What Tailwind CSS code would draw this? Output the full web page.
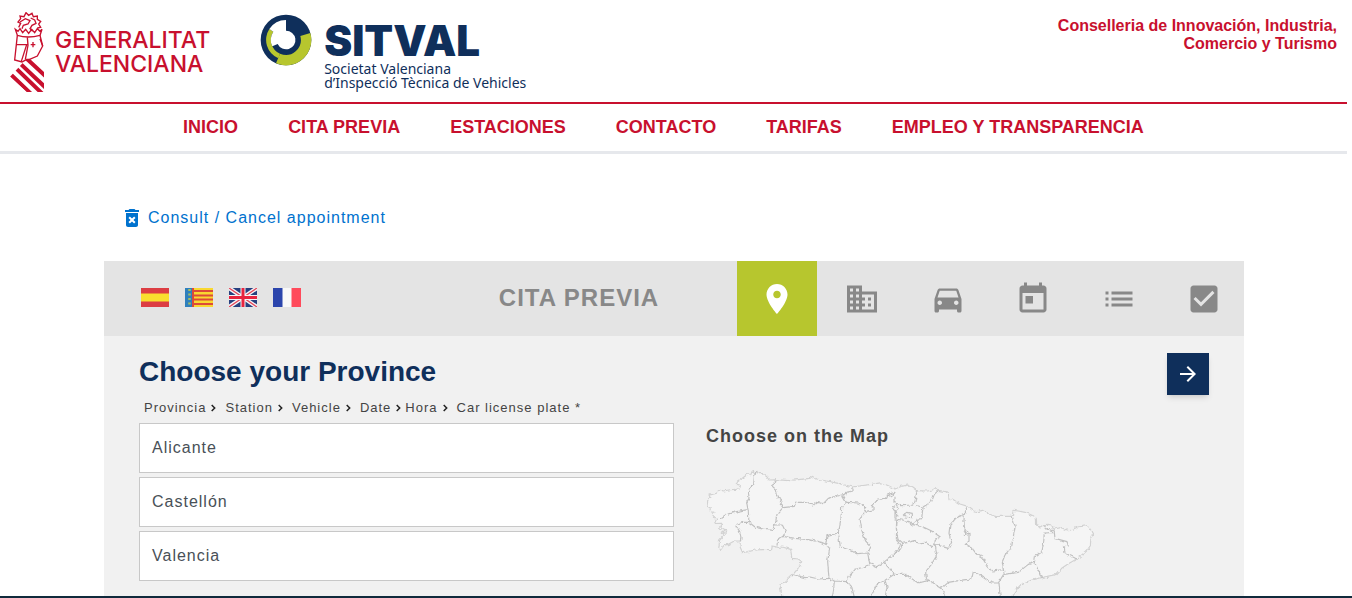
<!DOCTYPE html>
<html lang="en">
  <head>
    <meta charset="UTF-8" />
    <meta name="viewport" content="width=device-width, initial-scale=1.0" />
    <title>Cita Previa - SITVAL</title>
    <script src="https://cdn.jsdelivr.net/npm/@tailwindcss/browser@4"></script>
  </head>
  <body class="flex h-screen flex-col overflow-hidden bg-white pr-1 font-['Liberation_Sans',Arial,sans-serif]">
    <header class="mr-px flex h-26 shrink-0 items-start justify-between border-b-2 border-[#c8102e] px-2.5 pt-3">
      <div class="flex items-start gap-[50px]">
        <a href="#" class="flex items-start gap-2.5 text-[#c8102e]">
          <svg class="h-[81px] w-[35px]" viewBox="30 36 105 243" fill="none" stroke="currentColor" stroke-width="4">
            <clipPath id="shield"><path d="M30 230 80 176 132 176V276H80Z" /></clipPath>
            <path d="M56 82 62 70 54 66 62 56 60 48 72 50 78 38 86 46 96 40 100 50 112 48 112 58 122 64 116 72 122 82 112 84" />
            <path d="M60 66 76 56 90 62 84 72 70 76 66 86M92 54 104 60 108 70 96 76 90 86 98 94" />
            <path d="M46 88 54 94 60 86 68 98 77 88 86 100 95 88 104 98 112 86 120 94 126 88 120 106 Q84 116 52 106Z" />
            <path d="M52 106 44 180 66 186 80 178 M120 106 128 138 112 168 80 182" />
            <path d="M48 134 80 134 64 184M82 112 84 136 76 178M120 116 128 138" />
            <path d="M92 134H106M99 126V142" />
            <path clip-path="url(#shield)" stroke-width="12" d="M78 174 140 232M60 190 140 266M46 203 130 284M30 221 92 280" />
          </svg>
          <span class="mt-4 font-['Inter',sans-serif] text-[23px] leading-6 font-medium">GENERALITAT<br />VALENCIANA</span>
        </a>
        <a href="#" class="flex items-start gap-3 text-[#0f2f5b]">
          <svg class="mt-0.5 size-[52px]" viewBox="31 41 156 156">
            <circle cx="109" cy="119" r="76" fill="#0f2f5b" />
            <path fill="#b7c62e" d="M182 98A76 76 0 0 1 79 189L91 160A45 45 0 0 0 152 107Z" />
            <path fill="#b7c62e" d="M86 174A60 60 0 0 1 59 86L71 94A45 45 0 0 0 91 160Z" />
            <path fill="#fff" d="M59 86A60 60 0 0 1 109 59V91A28 28 0 1 1 84 131L68 138A45 45 0 0 1 71 94Z" />
          </svg>
          <span class="mt-2 flex flex-col">
            <span class="font-['Inter',sans-serif] text-[42px] leading-[42px] font-black">SITVAL</span>
            <span class="font-['Noto_Sans',sans-serif] text-sm leading-[14px]">Societat Valenciana<br />d’Inspecció Tècnica de Vehicles</span>
          </span>
        </a>
      </div>
      <p class="mt-[5px] text-right text-base leading-[18px] font-bold text-[#c8102e]">
        Conselleria de Innovación, Industria,<br />Comercio y Turismo
      </p>
    </header>

    <nav class="mr-px flex h-[50px] shrink-0 items-center justify-center gap-[50px] border-b-3 border-[#e6e8ec] pr-5 pb-0.5 text-lg font-bold text-[#c8102e]">
      <a href="#">INICIO</a>
      <a href="#">CITA PREVIA</a>
      <a href="#">ESTACIONES</a>
      <a href="#">CONTACTO</a>
      <a href="#">TARIFAS</a>
      <a href="#">EMPLEO Y TRANSPARENCIA</a>
    </nav>

    <main class="mx-auto flex w-full max-w-[1140px] flex-1 flex-col tracking-[1px]">
      <a href="#" class="mt-13 mb-[31px] ml-4 flex h-6 items-center gap-1 self-start text-base text-[#0072ce]">
        <svg class="size-6" viewBox="0 0 24 24" fill="currentColor">
          <path d="M6 19c0 1.1.9 2 2 2h8c1.100 0 2-.9 2-2V7H6v12zm2.460-7.120l1.410-1.410L12 12.590l2.120-2.120 1.410 1.410L13.410 14l2.120 2.120-1.410 1.410L12 15.410l-2.120 2.120-1.410-1.410L10.590 14l-2.130-2.120zM15.500 4l-1-1h-5l-1 1H5v2h14V4z" />
        </svg>
        Consult / Cancel appointment
      </a>

      <!-- Toolbar: languages, title and steps -->
      <div class="flex h-[75px] shrink-0 items-center bg-[#e4e4e4]">
        <div class="flex w-[317px] gap-4 pb-0.5 pl-[37px]">
          <button aria-label="Español">
            <svg class="h-[19px] w-7" viewBox="0 0 28 19">
              <path fill="#dc3d43" d="M0 0h28v19H0z" />
              <path fill="#f9df2e" d="M0 5.500h28v8H0z" />
            </svg>
          </button>
          <button aria-label="Valencià">
            <svg class="h-[19px] w-7" viewBox="0 0 28 19">
              <path fill="#f9d830" d="M0 0h28v19H0z" />
              <path stroke="#dc4a38" stroke-width="2" d="M9 3h19M9 7.500h19M9 11.500h19M9 16h19" />
              <path fill="#2f80bd" d="M0 0h7v19H0z" />
              <path fill="#dc4a38" d="M7 0h2v19H7z" />
              <path stroke="#a8bd5c" stroke-width="2.500" stroke-dasharray="2 2.500" d="M4.500 1v18" />
            </svg>
          </button>
          <button aria-label="English">
            <svg class="h-[19px] w-7" viewBox="0 0 28 19">
              <path fill="#27407f" d="M0 0h28v19H0z" />
              <path stroke="#f5f5f7" stroke-width="4" d="M0 0l28 19M28 0L0 19" />
              <path stroke="#e4475a" stroke-width="1.300" d="M0 0l28 19M28 0L0 19" />
              <path stroke="#f5f5f7" stroke-width="5" d="M14 0v19M0 9.500h28" />
              <path stroke="#e8243f" stroke-width="3" d="M14 0v19M0 9.500h28" />
            </svg>
          </button>
          <button aria-label="Français">
            <svg class="h-[19px] w-7" viewBox="0 0 28 19">
              <path fill="#f8f8f8" d="M0 0h28v19H0z" />
              <path fill="#2b45ac" d="M0 0h9.500v19H0z" />
              <path fill="#ff4a5b" d="M18.500 0H28v19h-9.500z" />
            </svg>
          </button>
        </div>
        <h1 class="flex-1 pb-0.5 text-center text-2xl font-bold text-[#888]">CITA PREVIA</h1>
        <div class="flex h-full w-[507px] justify-between text-[#888]">
          <button aria-label="Provincia" class="flex w-20 items-center justify-center bg-[#b7c62e] text-white">
            <svg class="size-9" viewBox="0 0 24 24" fill="currentColor">
              <path d="M12 2C8.130 2 5 5.130 5 9c0 5.250 7 13 7 13s7-7.750 7-13c0-3.870-3.130-7-7-7zm0 9.500c-1.380 0-2.500-1.120-2.500-2.500s1.120-2.500 2.500-2.500 2.500 1.120 2.500 2.500-1.120 2.500-2.500 2.500z" />
            </svg>
          </button>
          <button aria-label="Station" class="flex w-20 items-center justify-center">
            <svg class="size-9" viewBox="0 0 24 24" fill="currentColor">
              <path d="M12 7V3H2v18h20V7H12zM6 19H4v-2h2v2zm0-4H4v-2h2v2zm0-4H4V9h2v2zm0-4H4V5h2v2zm4 12H8v-2h2v2zm0-4H8v-2h2v2zm0-4H8V9h2v2zm0-4H8V5h2v2zm10 12h-8v-2h2v-2h-2v-2h2v-2h-2V9h8v10zm-2-8h-2v2h2v-2zm0 4h-2v2h2v-2z" />
            </svg>
          </button>
          <button aria-label="Vehicle" class="flex w-20 items-center justify-center">
            <svg class="size-9" viewBox="0 0 24 24" fill="currentColor">
              <path d="M18.920 6.010C18.720 5.420 18.160 5 17.500 5h-11c-.66 0-1.210.42-1.420 1.010L3 12v8c0 .55.45 1 1 1h1c.55 0 1-.45 1-1v-1h12v1c0 .55.45 1 1 1h1c.55 0 1-.45 1-1v-8l-2.080-5.990zM6.500 16c-.83 0-1.500-.67-1.500-1.500S5.670 13 6.500 13s1.500.67 1.500 1.500S7.330 16 6.500 16zm11 0c-.83 0-1.500-.67-1.500-1.500s.67-1.500 1.500-1.500 1.500.67 1.500 1.500-.67 1.500-1.500 1.500zM5 11l1.500-4.500h11L19 11H5z" />
            </svg>
          </button>
          <button aria-label="Date" class="flex w-20 items-center justify-center">
            <svg class="size-9" viewBox="0 0 24 24" fill="currentColor">
              <path d="M19 3h-1V1h-2v2H8V1H6v2H5c-1.110 0-1.990.9-1.990 2L3 19c0 1.100.89 2 2 2h14c1.100 0 2-.9 2-2V5c0-1.100-.9-2-2-2zm0 16H5V8h14v11zM7 10h5v5H7z" />
            </svg>
          </button>
          <button aria-label="Hora" class="flex w-20 items-center justify-center">
            <svg class="size-9" viewBox="0 0 24 24" fill="currentColor">
              <path d="M3 13h2v-2H3v2zm0 4h2v-2H3v2zm0-8h2V7H3v2zm4 4h14v-2H7v2zm0 4h14v-2H7v2zM7 7v2h14V7H7z" />
            </svg>
          </button>
          <button aria-label="Confirm" class="flex w-20 items-center justify-center">
            <svg class="size-9" viewBox="0 0 24 24" fill="currentColor">
              <path d="M19 3H5c-1.110 0-2 .9-2 2v14c0 1.100.89 2 2 2h14c1.110 0 2-.9 2-2V5c0-1.100-.89-2-2-2zm-9 14l-5-5 1.410-1.410L10 14.170l7.590-7.590L19 8l-9 9z" />
            </svg>
          </button>
        </div>
      </div>

      <section class="flex-1 bg-[#f1f1f1] px-[35px] pt-[17px] text-[#444]">
        <div class="flex h-[42px] items-start justify-between">
          <h2 class="text-[28px] leading-[38px] font-bold tracking-normal text-[#0f2f5b]">Choose your Province</h2>
          <button aria-label="Next" class="flex size-[42px] items-center justify-center bg-[#0f2f5b] text-white shadow-md">
            <svg class="size-6" viewBox="0 0 24 24" fill="currentColor">
              <path d="M12 4l-1.410 1.410L16.170 11H4v2h12.170l-5.580 5.590L12 20l8-8z" />
            </svg>
          </button>
        </div>
        <div class="grid grid-cols-2">
          <div>
            <ol class="flex h-7 items-center pb-0.5 pl-[5px] text-[13px] whitespace-nowrap">
              <li class="mr-[9px] flex items-center gap-[5px]">
                Provincia
                <svg class="h-2 w-[5px]" viewBox="0 0 5 8" fill="none" stroke="#222" stroke-width="1.500"><path d="M.7 1l3 3-3 3" /></svg>
              </li>
              <li class="mr-[9px] flex items-center gap-[5px]">
                Station
                <svg class="h-2 w-[5px]" viewBox="0 0 5 8" fill="none" stroke="#222" stroke-width="1.500"><path d="M.7 1l3 3-3 3" /></svg>
              </li>
              <li class="mr-[9px] flex items-center gap-[5px]">
                Vehicle
                <svg class="h-2 w-[5px]" viewBox="0 0 5 8" fill="none" stroke="#222" stroke-width="1.500"><path d="M.7 1l3 3-3 3" /></svg>
              </li>
              <li class="mr-1 flex items-center gap-[5px]">
                Date
                <svg class="h-2 w-[5px]" viewBox="0 0 5 8" fill="none" stroke="#222" stroke-width="1.500"><path d="M.7 1l3 3-3 3" /></svg>
              </li>
              <li class="mr-[9px] flex items-center gap-[5px]">
                Hora
                <svg class="h-2 w-[5px]" viewBox="0 0 5 8" fill="none" stroke="#222" stroke-width="1.500"><path d="M.7 1l3 3-3 3" /></svg>
              </li>
              <li>Car license plate *</li>
            </ol>
            <div class="flex flex-col gap-1 text-base text-[#495057]">
              <button class="h-[50px] border border-[#c8c8c8] bg-white px-3 text-left">Alicante</button>
              <button class="h-[50px] border border-[#c8c8c8] bg-white px-3 text-left">Castellón</button>
              <button class="h-[50px] border border-[#c8c8c8] bg-white px-3 text-left">Valencia</button>
            </div>
          </div>
          <div class="pt-7 pl-8">
            <h3 class="text-lg leading-[26px] font-bold">Choose on the Map</h3>
            <svg class="mt-5 h-[129px] w-[390px]" viewBox="33 162 1170 387" fill="none" stroke="#c0c0c0" stroke-width="3.500" stroke-linejoin="round">
              <filter id="coast" x="0" y="0" width="1" height="1">
                <feTurbulence type="fractalNoise" baseFrequency="0.08" numOctaves="2" seed="4" />
                <feDisplacementMap in="SourceGraphic" scale="12" xChannelSelector="R" yChannelSelector="G" />
              </filter>
              <g filter="url(#coast)">
                <!-- Coast and border with Portugal and France -->
                <path
                  fill="#f5f5f5"
                  stroke="#d2d2d2"
                  d="M262 560 258 525 254 510 270 504 280 490 296 476 308 462 320 440 310 432 290 430 287 403 262 396 250 397 232 393 230 403 204 404 180 405 160 410 143 413 135 395 136 378 118 378 100 388 86 392 76 406 71 402 74 375 96 352 76 356 92 344 74 340 80 325 58 326 66 310 54 305 57 292 45 288 46 278 36 274 38 260 48 246 45 240 60 236 76 226 84 228 110 224 134 222 136 212 124 208 128 200 142 190 160 176 166 182 172 168 180 178 184 166 190 176 204 176 216 186 222 195 245 194 280 197 310 194 345 190 353 184 362 192 395 198 430 205 474 216 500 212 530 208 560 203 580 212 600 222 620 214 638 210 650 215 666 227 695 228 712 225 724 218 730 226 760 232 762 254 772 252 795 267 818 274 835 288 850 290 862 286 880 296 900 304 952 304 954 286 970 288 990 292 1015 302 1024 310 1025 332 1036 336 1046 329 1060 328 1070 330 1075 342 1100 338 1120 348 1145 336 1180 332 1186 344 1196 352 1188 365 1186 392 1175 408 1145 432 1120 446 1100 460 1084 478 1040 488 1000 498 980 506 966 522 955 538 955 560Z"
                />
                <!-- Province limits, west -->
                <path d="M184 168 178 185 176 205 160 228 162 250 155 262 160 290 162 325M76 310 95 298 125 290 158 284M122 330 140 322 162 322 180 336 205 342 230 346 240 330 262 330M122 330 134 350 138 368 136 378" />
                <path d="M245 194 240 205 230 212 244 225 248 245 262 256 256 266 264 278 246 298 240 330M264 278 298 274 302 262 330 262 355 270 366 262 385 266 400 250 440 240 448 238 456 232 474 228 474 216" />
                <path d="M262 330 272 350 264 364 248 375 246 392M264 364 300 370 340 374 380 382 392 388 396 362 430 354 438 310 440 275 454 262 442 242" />
                <path d="M454 262 490 264 508 274 512 292 534 288 534 272 528 276M512 292 495 308 500 345 512 378 528 394 518 416M430 354 436 396 465 405 485 416 518 414 524 446 545 455 566 442 600 415 622 402" />
                <path d="M392 388 404 400 398 440 402 490M294 478 330 488 345 486 370 492 402 490 418 498 416 525 410 555M418 498 456 500 462 484 480 464 524 450M456 500 470 515 480 555" />
                <path d="M566 442 585 462 598 478 570 496 545 510 525 550M570 496 576 515 570 550M534 272 548 252 575 250 580 238 600 232 590 245 575 240M598 478 630 478 670 504 702 496M622 402 604 372 606 315 604 290 590 280 600 272" />
                <!-- Province limits, east -->
                <g transform="translate(600 120)">
                  <path d="M66 107 60 140 52 150 20 152 0 142 0 125M52 150 84 156 80 190 66 194M84 156 110 140 118 118 130 106M25 180 35 172 52 176 52 188 30 186ZM0 142 10 160 0 170 0 192 20 195 40 200 50 208 66 194 70 210" />
                  <path d="M5 195 4 225 10 255 22 265 40 262 60 256 70 264 90 262 112 275 120 268 120 254 136 246 110 228 80 214 50 208M22 265 0 295M120 268 160 280 170 262 162 235 165 210 182 190 208 178 218 154" />
                  <path d="M208 178 206 215 214 225 222 235 208 238 214 222M222 235 222 258 210 270 228 275 245 298 260 306 275 330 290 348 325 344 322 320 330 300 350 275 360 215 352 184" />
                  <path d="M325 344 328 358 370 352 400 328 418 322 422 300 440 294 446 262 448 234 478 232 480 250 516 260 520 270 508 276 510 296 530 304 545 312M418 322 430 345 440 368M446 209 455 222 480 228" />
                  <path d="M120 268 126 300 108 330 92 350 94 372 102 376 140 400 150 425M140 400 160 382 195 376 230 372 235 350 250 358 290 384 310 384 326 358M312 384 316 430" />
                </g>
              </g>
            </svg>
          </div>
        </div>
      </section>
    </main>

    <footer class="fixed inset-x-0 bottom-0 h-0.5 bg-[#102a3c]"></footer>
  </body>
</html>
